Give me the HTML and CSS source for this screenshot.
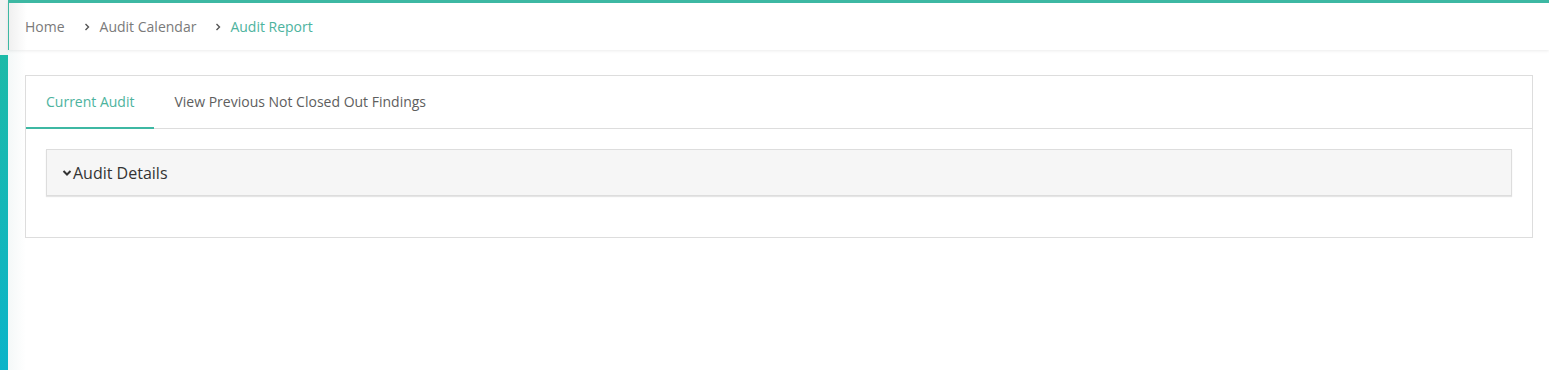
FILE: index.html
```html
<!DOCTYPE html>
<html>
<head>
<meta charset="utf-8">
<link rel="stylesheet" href="styles.css">
</head>
<body>
<div class="layout">
  <aside class="rail">
    <div class="rail-top"></div>
    <div class="rail-bar"></div>
  </aside>
  <main class="main">
    <header class="topbar">
      <nav class="crumbs">
        <span class="crumb">Home</span>
        <span class="sep"><svg width="8" height="10" viewBox="0 0 8 10"><path d="M2.5 2 L5.5 5 L2.5 8" fill="none" stroke="#555" stroke-width="1.4"/></svg></span>
        <span class="crumb">Audit Calendar</span>
        <span class="sep"><svg width="8" height="10" viewBox="0 0 8 10"><path d="M2.5 2 L5.5 5 L2.5 8" fill="none" stroke="#555" stroke-width="1.4"/></svg></span>
        <span class="crumb active">Audit Report</span>
      </nav>
    </header>
    <section class="content">
      <div class="card">
        <div class="tabs">
          <div class="tab active">Current Audit</div>
          <div class="tab">View Previous Not Closed Out Findings</div>
        </div>
        <div class="card-body">
          <div class="panel">
            <svg class="chev" width="10" height="8" viewBox="0 0 10 8"><path d="M1.5 2 L5 5.5 L8.5 2" fill="none" stroke="#333" stroke-width="2"/></svg>
            <span>Audit Details</span>
          </div>
        </div>
      </div>
    </section>
  </main>
</div>
</body>
</html>
```

FILE: styles.css
```css
html, body {
  margin: 0;
  padding: 0;
  height: 100%;
  background: #fff;
  font-family: "Open Sans", "Liberation Sans", sans-serif;
}
.layout {
  display: flex;
  height: 370px;
}
.rail {
  width: 8px;
  flex: 0 0 8px;
  display: flex;
  flex-direction: column;
}
.rail-top {
  height: 55px;
  background: #f3f3f3;
}
.rail-bar {
  flex: 1;
  background: linear-gradient(to bottom, #1dbaa8, #0ab4c9);
}
.main {
  flex: 1;
  display: flex;
  flex-direction: column;
  background: linear-gradient(to right, #f4f8f8 0px, #ffffff 18px);
}
.topbar {
  height: 46px;
  border-top: 3px solid #3db8a3;
  border-left: 1px solid #3db8a3;
  background: linear-gradient(to right, #f0f0f0 0px, #ffffff 18px);
  box-shadow: 0 1px 3px rgba(0,0,0,0.08);
  display: flex;
  align-items: center;
  padding-left: 16px;
  padding-bottom: 1px;
  box-sizing: content-box;
}
.crumbs {
  display: flex;
  align-items: center;
  font-size: 14px;
  color: #7a7a7a;
}
.sep {
  display: inline-flex;
  margin: 2px 9px 0 18px;
}
.sep + .crumb.active {
  margin-left: -1px;
}
.crumb.active {
  color: #4db39e;
}
.content {
  padding: 25px 16px 0 17px;
}
.card {
  border: 1px solid #ddd;
  background: #fff;
}
.tabs {
  display: flex;
  height: 52px;
  border-bottom: 1px solid #ddd;
}
.tab {
  padding: 0 20px;
  display: flex;
  align-items: center;
  font-size: 14px;
  color: #5e5e5e;
  border-bottom: 2px solid transparent;
  margin-bottom: -1px;
}
.tab.active {
  color: #4db39e;
  border-bottom-color: #3db8a3;
}
.card-body {
  padding: 20px 20px 41px 20px;
}
.panel {
  height: 45px;
  background: #f6f6f6;
  border: 1px solid #ddd;
  box-shadow: 0 1px 1px rgba(0,0,0,0.1);
  display: flex;
  align-items: center;
  padding-left: 15px;
  font-size: 16px;
  color: #333;
}
.chev {
  margin-right: 1px;
  margin-top: 1px;
}
```
